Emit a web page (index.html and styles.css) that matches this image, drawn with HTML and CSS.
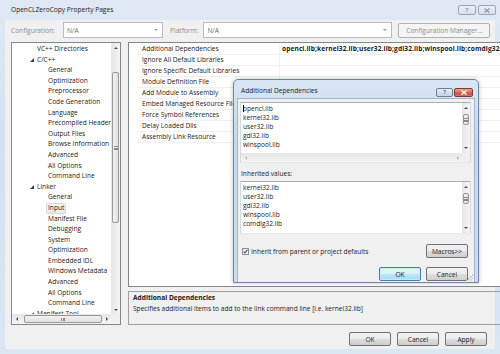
FILE: index.html
```html
<!DOCTYPE html>
<html lang="en">
<head>
	<meta charset="UTF-8">
	<title>OpenCLZeroCopy Property Pages</title>
	<link rel="stylesheet" href="styles.css">
</head>
<body>
	<div class="window">
		<div class="titlebar">
			<span class="title">OpenCLZeroCopy Property Pages</span>
			<div class="caption-buttons">
				<span class="cap-btn">?</span>
				<span class="cap-btn">
					<svg width="6" height="5" viewBox="0 0 6 5"><path d="M0.5 0.5L5.5 4.5M5.5 0.5L0.5 4.5" stroke="#8a96a6" stroke-width="1.2"/></svg>
				</span>
			</div>
		</div>

		<div class="client">
			<div class="toolbar">
				<span class="tb-label">Configuration:</span>
				<div class="combo combo-config"><span>N/A</span><span class="tri-down"></span></div>
				<span class="tb-label tb-platform">Platform:</span>
				<div class="combo combo-platform"><span>N/A</span><span class="tri-down"></span></div>
				<span class="btn btn-disabled btn-manager">Configuration Manager...</span>
			</div>

			<div class="main">
				<!-- left tree with both scrollbars -->
				<div class="tree">
					<ul class="tree-list">
						<li class="lvl0">VC++ Directories</li>
						<li class="lvl0"><span class="expander"></span>C/C++</li>
						<li class="lvl1">General</li>
						<li class="lvl1">Optimization</li>
						<li class="lvl1">Preprocessor</li>
						<li class="lvl1">Code Generation</li>
						<li class="lvl1">Language</li>
						<li class="lvl1">Precompiled Headers</li>
						<li class="lvl1">Output Files</li>
						<li class="lvl1">Browse Information</li>
						<li class="lvl1">Advanced</li>
						<li class="lvl1">All Options</li>
						<li class="lvl1">Command Line</li>
						<li class="lvl0"><span class="expander"></span>Linker</li>
						<li class="lvl1">General</li>
						<li class="lvl1"><span class="selected">Input</span></li>
						<li class="lvl1">Manifest File</li>
						<li class="lvl1">Debugging</li>
						<li class="lvl1">System</li>
						<li class="lvl1">Optimization</li>
						<li class="lvl1">Embedded IDL</li>
						<li class="lvl1">Windows Metadata</li>
						<li class="lvl1">Advanced</li>
						<li class="lvl1">All Options</li>
						<li class="lvl1">Command Line</li>
						<li class="lvl0"><span class="expander"></span>Manifest Tool</li>
					</ul>
					<div class="vscroll tree-vscroll">
						<span class="sb-arrow"><span class="tri-up"></span></span>
						<span class="sb-gap tree-gap-top"></span>
						<span class="sb-thumb tree-thumb"><span class="grip"></span></span>
						<span class="sb-gap sb-fill"></span>
						<span class="sb-arrow"><span class="tri-down"></span></span>
					</div>
					<div class="hscroll tree-hscroll">
						<span class="sb-arrow-h"><span class="tri-left"></span></span>
						<span class="sb-thumb-h"><span class="grip-h"></span></span>
						<span class="sb-fill"></span>
						<span class="sb-arrow-h"><span class="tri-right"></span></span>
					</div>
					<div class="sb-corner"></div>
				</div>

				<div class="right">
					<div class="grid">
						<div class="row"><span class="name">Additional Dependencies</span><span class="value bold">opencl.lib;kernel32.lib;user32.lib;gdi32.lib;winspool.lib;comdlg32.lib;advapi32.lib</span></div>
						<div class="row"><span class="name">Ignore All Default Libraries</span><span class="value"></span></div>
						<div class="row"><span class="name">Ignore Specific Default Libraries</span><span class="value"></span></div>
						<div class="row"><span class="name">Module Definition File</span><span class="value"></span></div>
						<div class="row"><span class="name">Add Module to Assembly</span><span class="value"></span></div>
						<div class="row"><span class="name">Embed Managed Resource File</span><span class="value"></span></div>
						<div class="row"><span class="name">Force Symbol References</span><span class="value"></span></div>
						<div class="row"><span class="name">Delay Loaded Dlls</span><span class="value"></span></div>
						<div class="row"><span class="name">Assembly Link Resource</span><span class="value"></span></div>
					</div>
					<div class="desc">
						<div class="desc-title">Additional Dependencies</div>
						<div>Specifies additional items to add to the link command line [i.e. kernel32.lib]</div>
					</div>
				</div>
			</div>

			<div class="buttons">
				<span class="btn">OK</span>
				<span class="btn">Cancel</span>
				<span class="btn">Apply</span>
			</div>
		</div>

		<!-- modal editor on top of the property page -->
		<div class="dialog">
			<div class="dlg-titlebar">
				<span class="dlg-title">Additional Dependencies</span>
				<div class="dlg-caption">
					<span class="dlg-help">?</span>
					<span class="dlg-close">
						<svg width="6" height="5" viewBox="0 0 6 5"><path d="M0.5 0.5L5.5 4.5M5.5 0.5L0.5 4.5" stroke="#fff" stroke-width="1.3"/></svg>
					</span>
				</div>
			</div>
			<div class="dlg-content">
				<div class="edit-box">
					<ul class="lines">
						<li><span class="caret"></span>opencl.lib</li>
						<li>kernel32.lib</li>
						<li>user32.lib</li>
						<li>gdi32.lib</li>
						<li>winspool.lib</li>
					</ul>
					<div class="vscroll">
						<span class="sb-arrow"><span class="tri-up"></span></span>
						<span class="sb-gap edit-gap"></span>
						<span class="sb-thumb small-thumb"><span class="grip"></span></span>
						<span class="sb-gap sb-fill"></span>
						<span class="sb-arrow"><span class="tri-down"></span></span>
					</div>
					<div class="hscroll">
						<span class="sb-arrow-h"><span class="tri-left faint"></span></span>
						<span class="sb-fill"></span>
						<span class="sb-arrow-h"><span class="tri-right faint"></span></span>
					</div>
					<div class="sb-corner"></div>
				</div>

				<div class="inh-label">Inherited values:</div>
				<div class="inh-box">
					<ul class="lines">
						<li>kernel32.lib</li>
						<li>user32.lib</li>
						<li>gdi32.lib</li>
						<li>winspool.lib</li>
						<li>comdlg32.lib</li>
					</ul>
					<div class="vscroll">
						<span class="sb-arrow"><span class="tri-up"></span></span>
						<span class="sb-gap inh-gap"></span>
						<span class="sb-thumb small-thumb"><span class="grip"></span></span>
						<span class="sb-gap sb-fill"></span>
						<span class="sb-arrow"><span class="tri-down"></span></span>
					</div>
				</div>

				<div class="check-row">
					<span class="checkbox">
						<svg width="5" height="5" viewBox="0 0 5 5"><path d="M0.6 2.6L1.9 4L4.4 0.8" stroke="#3a4f8a" stroke-width="1.1" fill="none"/></svg>
					</span>
					<span class="check-text">Inherit from parent or project defaults</span>
					<span class="btn btn-macros">Macros&gt;&gt;</span>
				</div>

				<div class="dlg-buttons">
					<span class="btn btn-default">OK</span>
					<span class="btn">Cancel</span>
				</div>
				<span class="grip-corner"></span>
			</div>
		</div>
	</div>
</body>
</html>
```

FILE: styles.css
```css
* {
	margin: 0;
	padding: 0;
	box-sizing: border-box;
}

body {
	font-family: "Open Sans", "Noto Sans", sans-serif;
	font-size: 6.6px;
	color: #1b1b1b;
	background: #fff;
}

ul {
	list-style-type: none;
}

.window {
	position: relative;
	width: 500px;
	height: 354px;
	display: flex;
	flex-direction: column;
	padding: 0 5px 5px;
	background: linear-gradient(#dfe9f5, #d3e1f1 40%, #dbe6f3);
	overflow: hidden;
}

/* title bar */
.titlebar {
	height: 20px;
	display: flex;
	align-items: center;
	justify-content: space-between;
	padding-left: 6px;
}

.title {
	font-size: 6.6px;
	color: #222;
	margin-top: -1px;
}

.caption-buttons {
	display: flex;
	gap: 2px;
	align-self: flex-start;
	margin-top: 5px;
	margin-right: -1px;
}

.cap-btn {
	width: 18px;
	height: 10px;
	border: 1px solid #9aa7b8;
	border-radius: 2px;
	background: linear-gradient(#e9eff7, #d6e0ec);
	display: flex;
	align-items: center;
	justify-content: center;
	font-size: 6px;
	color: #8a96a6;
	font-weight: bold;
}

/* client area */
.client {
	flex: 1;
	background: #f0f0f0;
	padding: 2px 3px 0 6px;
	display: flex;
	flex-direction: column;
}

.toolbar {
	height: 16px;
	display: flex;
	align-items: center;
	flex-shrink: 0;
}

.tb-label {
	color: #8d8d8d;
	width: 52px;
}

.tb-platform {
	width: auto;
	margin-left: 7px;
	margin-right: 5px;
}

.combo {
	height: 16px;
	border: 1px solid #b8bcc2;
	background: #fff;
	display: flex;
	align-items: center;
	justify-content: space-between;
	padding: 0 4px 0 3px;
	color: #6d6d6d;
}

.combo-config {
	width: 100px;
}

.combo-platform {
	width: 189px;
}

.combo .tri-down {
	border-top-color: #9a9a9a;
}

.btn {
	height: 14px;
	width: 42px;
	flex-shrink: 0;
	border: 1px solid #707070;
	border-radius: 2px;
	background: linear-gradient(#f2f2f2, #ebebeb 50%, #dddddd 51%, #cfcfcf);
	display: flex;
	align-items: center;
	justify-content: center;
	color: #1b1b1b;
	white-space: nowrap;
}

.btn-disabled {
	border-color: #adb2b5;
	background: #f4f4f4;
	color: #8d8d8d;
}

.btn-manager {
	width: 92px;
	height: 15px;
	margin-left: 6px;
}

/* main split */
.main {
	margin-top: 4px;
	height: 283px;
	flex-shrink: 0;
	display: flex;
	gap: 7px;
}

.tree {
	width: 110px;
	border: 1px solid #828790;
	background: #fff;
	display: grid;
	grid-template-columns: 1fr 9px;
	grid-template-rows: 1fr 10px;
}

.tree-list {
	overflow: hidden;
	padding-top: 1px;
	white-space: nowrap;
}

.tree-list li {
	height: 10.6px;
	line-height: 10.6px;
	display: flex;
	align-items: center;
}

.lvl0 {
	padding-left: 25px;
}

.lvl1 {
	padding-left: 36px;
}

.expander {
	width: 4px;
	height: 4px;
	margin-left: -7px;
	margin-right: 3px;
	background: #3c3c3c;
	clip-path: polygon(100% 0, 100% 100%, 0 100%);
}

.selected {
	border: 1px solid #d9d9d9;
	border-radius: 2px;
	background: linear-gradient(#f8f8f8, #e9e9e9);
	padding: 0 1px;
	margin-left: -2px;
	line-height: 8.6px;
}

/* scrollbars */
.vscroll {
	display: flex;
	flex-direction: column;
	background: linear-gradient(90deg, #e6e6e6, #f4f4f4);
}

.hscroll {
	display: flex;
	background: linear-gradient(#e6e6e6, #f4f4f4);
}

.sb-corner {
	background: #f0f0f0;
}

.sb-arrow {
	height: 9px;
	display: flex;
	align-items: center;
	justify-content: center;
	flex-shrink: 0;
}

.sb-arrow-h {
	width: 9px;
	display: flex;
	align-items: center;
	justify-content: center;
	flex-shrink: 0;
}

.sb-fill {
	flex: 1;
}

.sb-thumb {
	margin: 0 1px;
	border: 1px solid #979797;
	border-radius: 2px;
	background: linear-gradient(90deg, #f2f2f2, #e0e0e0);
	display: flex;
	align-items: center;
	justify-content: center;
	flex-shrink: 0;
}

.sb-thumb-h {
	width: 78px;
	margin: 1px 0 1px 3px;
	border: 1px solid #979797;
	border-radius: 2px;
	background: linear-gradient(#f2f2f2, #e0e0e0);
	display: flex;
	align-items: center;
	justify-content: center;
}

.grip {
	width: 4px;
	height: 4px;
	border-top: 1px solid #8a8a8a;
	border-bottom: 1px solid #8a8a8a;
	background: linear-gradient(transparent 1px, #8a8a8a 1px, #8a8a8a 2px, transparent 2px);
}

.grip-h {
	width: 4px;
	height: 3px;
	border-left: 1px solid #8a8a8a;
	border-right: 1px solid #8a8a8a;
	background: linear-gradient(90deg, transparent 1px, #8a8a8a 1px, #8a8a8a 2px, transparent 2px);
}

.tree-gap-top {
	height: 20px;
}

.tree-thumb {
	height: 151px;
}

.tri-up, .tri-down {
	width: 0;
	height: 0;
	border-left: 2px solid transparent;
	border-right: 2px solid transparent;
}

.tri-up {
	border-bottom: 2px solid #4d4d4d;
}

.tri-down {
	border-top: 2px solid #4d4d4d;
}

.tri-left, .tri-right {
	width: 0;
	height: 0;
	border-top: 2px solid transparent;
	border-bottom: 2px solid transparent;
}

.tri-left {
	border-right: 2px solid #4d4d4d;
}

.tri-right {
	border-left: 2px solid #4d4d4d;
}

.tri-left.faint {
	border-right-color: #b5b5b5;
}

.tri-right.faint {
	border-left-color: #b5b5b5;
}

/* property grid */
.right {
	flex: 1;
	display: flex;
	flex-direction: column;
	gap: 4px;
}

.grid {
	height: 245px;
	flex-shrink: 0;
	border: 1px solid #828790;
	background: #fff;
	padding-left: 9px;
	padding-top: 0.5px;
	overflow: hidden;
}

.row {
	height: 11.1px;
	display: flex;
	border-bottom: 1px solid #f0f0f0;
	white-space: nowrap;
}

.name {
	width: 142px;
	padding-left: 4px;
	line-height: 10.1px;
	border-right: 1px solid #f0f0f0;
	overflow: hidden;
}

.value {
	flex: 1;
	padding-left: 2px;
	line-height: 10.1px;
	overflow: hidden;
}

.bold {
	font-weight: bold;
	letter-spacing: 0.1px;
}

.desc {
	height: 34px;
	flex-shrink: 0;
	border: 1px solid #a0a0a0;
	padding: 1px 4px;
	line-height: 10.5px;
}

.desc-title {
	font-weight: bold;
}

.buttons {
	margin-top: 7px;
	display: flex;
	justify-content: flex-end;
	gap: 6px;
	padding-right: 5px;
}

/* dialog */
.dialog {
	position: absolute;
	left: 233px;
	top: 79px;
	width: 246px;
	height: 204px;
	border: 1px solid #6f84a3;
	border-radius: 5px 5px 0 0;
	background: linear-gradient(#d9e6f5, #c6d8ee 30%, #cddcf0);
	padding: 0 3px;
	display: flex;
	flex-direction: column;
	box-shadow: 0 0 4px rgba(0, 0, 0, 0.25);
}

.dlg-titlebar {
	height: 18px;
	flex-shrink: 0;
	display: flex;
	align-items: center;
	justify-content: space-between;
	padding-left: 4px;
}

.dlg-title {
	color: #1b1b1b;
	margin-top: 2px;
}

.dlg-caption {
	display: flex;
	gap: 1px;
	margin-top: 6px;
	margin-right: 2px;
}

.dlg-help, .dlg-close {
	height: 9px;
	border: 1px solid #6f7f95;
	border-radius: 2px;
	display: flex;
	align-items: center;
	justify-content: center;
	font-size: 5.5px;
	font-weight: bold;
}

.dlg-help {
	width: 17px;
	background: linear-gradient(#e7eef7, #c3d2e6);
	color: #5d6f88;
}

.dlg-close {
	width: 19px;
	border-color: #7f3a31;
	background: linear-gradient(#eaa595, #d5685a 50%, #c6473a 51%, #d2786a);
}

.dlg-content {
	position: relative;
	flex: 1;
	background: #f0f0f0;
	border: 1px solid #a5b6cc;
	border-bottom: none;
	padding: 3px 3px 0 2px;
	display: flex;
	flex-direction: column;
}

.edit-box, .inh-box {
	flex-shrink: 0;
	border: 1px solid #abadb3;
	border-left-color: #d5d9e0;
	border-right-color: #d5d9e0;
	border-bottom-color: #e3e9ef;
	background: #fff;
	display: grid;
	grid-template-columns: 1fr 8px;
}

.edit-box {
	height: 61px;
	grid-template-rows: 1fr 9px;
}

.inh-box {
	height: 53px;
	margin-top: 3px;
}

.lines {
	padding: 1px 0 0 2px;
	overflow: hidden;
}

.lines li {
	height: 9px;
	line-height: 9px;
	display: flex;
	align-items: center;
}

.caret {
	width: 1px;
	height: 7px;
	background: #000;
	margin-right: -1px;
}

.edit-box .sb-arrow, .inh-box .sb-arrow {
	height: 10px;
}

.edit-gap {
	height: 1px;
}

.inh-gap {
	height: 1px;
}

.small-thumb {
	height: 11px;
}

.inh-label {
	margin-top: 6px;
	line-height: 9px;
	padding-left: 1px;
	flex-shrink: 0;
}

.check-row {
	margin-top: 10px;
	display: flex;
	align-items: center;
	padding-left: 2px;
	padding-right: 3px;
	flex-shrink: 0;
}

.checkbox {
	width: 7px;
	height: 7px;
	border: 1px solid #8f8f8f;
	background: linear-gradient(#e6e6e6, #fafafa);
	display: flex;
	align-items: center;
	justify-content: center;
}

.check-text {
	flex: 1;
	margin-left: 2px;
}

.btn-macros {
	height: 14px;
}

.dlg-buttons {
	margin-top: 9px;
	display: flex;
	justify-content: flex-end;
	gap: 5px;
	padding-right: 3px;
	flex-shrink: 0;
}

.btn-default {
	border-color: #3c7fb1;
	background: linear-gradient(#eaf6fd, #d9f0fc 50%, #bee6fd 51%, #a7d9f5);
	box-shadow: inset 0 0 0 1px #c7ecfc;
}

.grip-corner {
	position: absolute;
	right: 1px;
	bottom: 1px;
	width: 7px;
	height: 7px;
	background: linear-gradient(135deg, transparent 50%, #b9c3cf 50%, #b9c3cf 60%, transparent 60%, transparent 72%, #b9c3cf 72%, #b9c3cf 82%, transparent 82%);
}
```
